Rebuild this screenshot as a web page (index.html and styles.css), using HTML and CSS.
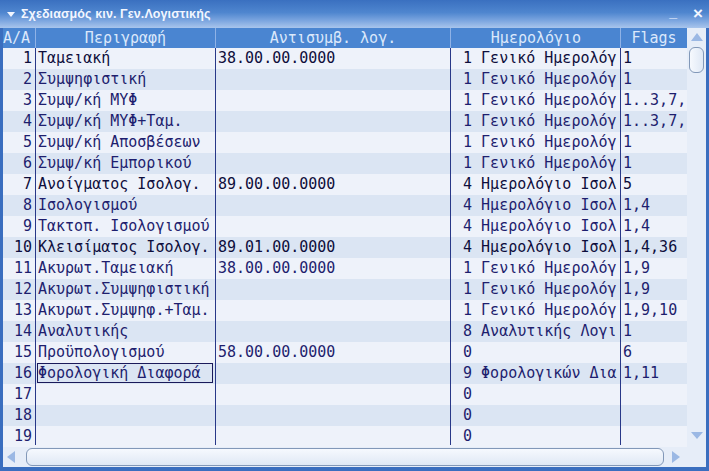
FILE: index.html
```html
<!DOCTYPE html>
<html lang="el">
<head>
<meta charset="utf-8">
<title>Σχεδιασμός κιν. Γεν.Λογιστικής</title>
<link rel="stylesheet" href="styles.css">
</head>
<body>
<div class="window">
  <div class="titlebar">
    <span class="caret"></span>
    <span class="title">Σχεδιασμός κιν. Γεν.Λογιστικής</span>
    <span class="tb-btn minimize">_</span>
    <span class="tb-btn close">×</span>
  </div>
  <div class="body">
    <div class="gridwrap">
      <div class="grid">
        <div class="row head">
          <div class="c c1">A/A</div>
          <div class="c c2">Περιγραφή</div>
          <div class="c c3">Αντισυμβ. λογ.</div>
          <div class="c c4">Ημερολόγιο</div>
          <div class="c c5">Flags</div>
        </div>
        <div class="row odd dark"><div class="c c1">1</div><div class="c c2">Ταμειακή</div><div class="c c3">38.00.00.0000</div><div class="c c4"><span class="n">1</span> Γενικό Ημερολόγ</div><div class="c c5">1</div></div>
        <div class="row even"><div class="c c1">2</div><div class="c c2">Συμψηφιστική</div><div class="c c3"></div><div class="c c4"><span class="n">1</span> Γενικό Ημερολόγ</div><div class="c c5">1</div></div>
        <div class="row odd"><div class="c c1">3</div><div class="c c2">Συμψ/κή ΜΥΦ</div><div class="c c3"></div><div class="c c4"><span class="n">1</span> Γενικό Ημερολόγ</div><div class="c c5">1..3,7,</div></div>
        <div class="row even"><div class="c c1">4</div><div class="c c2">Συμψ/κή ΜΥΦ+Ταμ.</div><div class="c c3"></div><div class="c c4"><span class="n">1</span> Γενικό Ημερολόγ</div><div class="c c5">1..3,7,</div></div>
        <div class="row odd"><div class="c c1">5</div><div class="c c2">Συμψ/κή Αποσβέσεων</div><div class="c c3"></div><div class="c c4"><span class="n">1</span> Γενικό Ημερολόγ</div><div class="c c5">1</div></div>
        <div class="row even"><div class="c c1">6</div><div class="c c2">Συμψ/κή Εμπορικού</div><div class="c c3"></div><div class="c c4"><span class="n">1</span> Γενικό Ημερολόγ</div><div class="c c5">1</div></div>
        <div class="row odd dark"><div class="c c1">7</div><div class="c c2">Ανοίγματος Ισολογ.</div><div class="c c3">89.00.00.0000</div><div class="c c4"><span class="n">4</span> Ημερολόγιο Ισολ</div><div class="c c5">5</div></div>
        <div class="row even"><div class="c c1">8</div><div class="c c2">Ισολογισμού</div><div class="c c3"></div><div class="c c4"><span class="n">4</span> Ημερολόγιο Ισολ</div><div class="c c5">1,4</div></div>
        <div class="row odd"><div class="c c1">9</div><div class="c c2">Τακτοπ. Ισολογισμού</div><div class="c c3"></div><div class="c c4"><span class="n">4</span> Ημερολόγιο Ισολ</div><div class="c c5">1,4</div></div>
        <div class="row even dark"><div class="c c1">10</div><div class="c c2">Κλεισίματος Ισολογ.</div><div class="c c3">89.01.00.0000</div><div class="c c4"><span class="n">4</span> Ημερολόγιο Ισολ</div><div class="c c5">1,4,36</div></div>
        <div class="row odd"><div class="c c1">11</div><div class="c c2">Ακυρωτ.Ταμειακή</div><div class="c c3">38.00.00.0000</div><div class="c c4"><span class="n">1</span> Γενικό Ημερολόγ</div><div class="c c5">1,9</div></div>
        <div class="row even"><div class="c c1">12</div><div class="c c2">Ακυρωτ.Συμψηφιστική</div><div class="c c3"></div><div class="c c4"><span class="n">1</span> Γενικό Ημερολόγ</div><div class="c c5">1,9</div></div>
        <div class="row odd"><div class="c c1">13</div><div class="c c2">Ακυρωτ.Συμψηφ.+Ταμ.</div><div class="c c3"></div><div class="c c4"><span class="n">1</span> Γενικό Ημερολόγ</div><div class="c c5">1,9,10</div></div>
        <div class="row even"><div class="c c1">14</div><div class="c c2">Αναλυτικής</div><div class="c c3"></div><div class="c c4"><span class="n">8</span> Αναλυτικής Λογι</div><div class="c c5">1</div></div>
        <div class="row odd"><div class="c c1">15</div><div class="c c2">Προϋπολογισμού</div><div class="c c3">58.00.00.0000</div><div class="c c4"><span class="n">0</span></div><div class="c c5">6</div></div>
        <div class="row even"><div class="c c1">16</div><div class="c c2"><span class="focus">Φορολογική Διαφορά</span></div><div class="c c3"></div><div class="c c4"><span class="n">9</span> Φορολογικών Δια</div><div class="c c5">1,11</div></div>
        <div class="row odd"><div class="c c1">17</div><div class="c c2"></div><div class="c c3"></div><div class="c c4"><span class="n">0</span></div><div class="c c5"></div></div>
        <div class="row even"><div class="c c1">18</div><div class="c c2"></div><div class="c c3"></div><div class="c c4"><span class="n">0</span></div><div class="c c5"></div></div>
        <div class="row odd last"><div class="c c1">19</div><div class="c c2"></div><div class="c c3"></div><div class="c c4"><span class="n">0</span></div><div class="c c5"></div></div>
      </div>
      <div class="vscroll">
        <svg class="arr" width="14" height="10" viewBox="0 0 14 10"><polygon points="7,1 13,9 1,9" fill="#9bb8e4"/></svg>
        <div class="vthumb"></div>
        <div class="vspace"></div>
        <svg class="arr down" width="14" height="10" viewBox="0 0 14 10"><polygon points="1,2 13,2 7,9" fill="#9bb8e4"/></svg>
      </div>
    </div>
    <div class="hscroll">
      <svg class="harr" width="10" height="14" viewBox="0 0 10 14"><polygon points="9,1 9,13 1,7" fill="#9bb8e4"/></svg>
      <div class="hthumb"></div>
      <svg class="harr" width="10" height="14" viewBox="0 0 10 14"><polygon points="1,1 1,13 9,7" fill="#9bb8e4"/></svg>
      <div class="hcorner"></div>
    </div>
  </div>
</div>
</body>
</html>
```

FILE: styles.css
```css
* { box-sizing: border-box; }
html, body { margin: 0; padding: 0; }
body { width: 709px; height: 471px; overflow: hidden; background: #3c70c0; }

.window {
  width: 709px;
  height: 471px;
  display: flex;
  flex-direction: column;
  background: #3a6ebf;
}

.titlebar {
  height: 28px;
  display: flex;
  align-items: center;
  padding: 0 6px 0 7px;
  background: linear-gradient(to bottom, #3a70c0 0%, #4f86cf 45%, #7ea7e0 75%, #a9c5ec 100%);
  color: #f2f6ff;
  font-family: "DejaVu Sans", sans-serif;
}
.caret {
  width: 0; height: 0;
  border-left: 4px solid transparent;
  border-right: 4px solid transparent;
  border-top: 5px solid #f2f6ff;
  margin-right: 6px;
  margin-top: 1px;
}
.title {
  flex: 1;
  font-family: "Liberation Sans", sans-serif;
  font-weight: bold;
  font-size: 12.5px;
  letter-spacing: 0.1px;
}
.tb-btn {
  font-family: "Liberation Sans", sans-serif;
  font-weight: bold;
  font-size: 14px;
  color: #f2f6ff;
}
.minimize { margin-right: 16px; margin-top: -4px; }
.close { font-size: 17px; }

.body {
  flex: 1;
  display: flex;
  flex-direction: column;
  margin: 0 3px 4px 3px;
  background: #e6edf8;
}

.gridwrap {
  height: 419px;
  display: flex;
}

.grid {
  width: 684px;
  display: flex;
  flex-direction: column;
  font-family: "DejaVu Sans Mono", monospace;
  font-size: 15px;
  color: #1e1e6e;
}

.row {
  display: flex;
  height: 21px;
  line-height: 21px;
}
.row.head {
  height: 20px;
  line-height: 20px;
  background: #4a85d1;
  color: #dbe8fb;
}
.row.odd { background: #eef2fa; }
.row.even { background: #dbe5f3; }
.row.dark { color: #0e0e3c; }

.c {
  white-space: nowrap;
  overflow: hidden;
  border-right: 1px solid #283888;
  padding: 0 2px;
}
.head .c { border-right-color: #8fb2e6; text-align: center; }
.row.last .c { height: 19px; }

.c1 { width: 33px; text-align: right; padding-right: 3px; padding-left: 0; }
.head .c1 { text-align: left; padding: 0; }
.c2 { width: 180px; }
.c3 { width: 235px; }
.c4 { width: 170px; padding-left: 3px; }
.c5 { width: 66px; border-right: none; }
.head .c5 { border-right: none; }

.n { display: inline-block; width: 2ch; text-align: right; }

.focus {
  display: inline-block;
  border: 1px solid #1a1a5a;
  line-height: 18px;
  height: 20px;
  padding: 0 3px 0 0;
  margin-left: -1px;
  width: 176px;
}

.vscroll {
  width: 19px;
  display: flex;
  flex-direction: column;
  align-items: center;
  background: #e6edf8;
  padding-top: 4px;
}
.vthumb {
  width: 15px;
  height: 26px;
  margin-top: 5px;
  border: 1px solid #8298b8;
  border-radius: 6px;
  background: linear-gradient(to right, #f6f9fe, #dfe8f5);
}
.vspace { flex: 1; }
.vscroll .arr.down { margin-bottom: 7px; }

.hscroll {
  height: 20px;
  display: flex;
  align-items: center;
  padding-left: 3px;
  background: #e6edf8;
}
.hthumb {
  width: 638px;
  height: 18px;
  margin: 0 7px 0 10px;
  border: 1px solid #8298b8;
  border-radius: 6px;
  background: linear-gradient(to bottom, #f6f9fe, #dfe8f5);
}
.hcorner { flex: 1; }
```
